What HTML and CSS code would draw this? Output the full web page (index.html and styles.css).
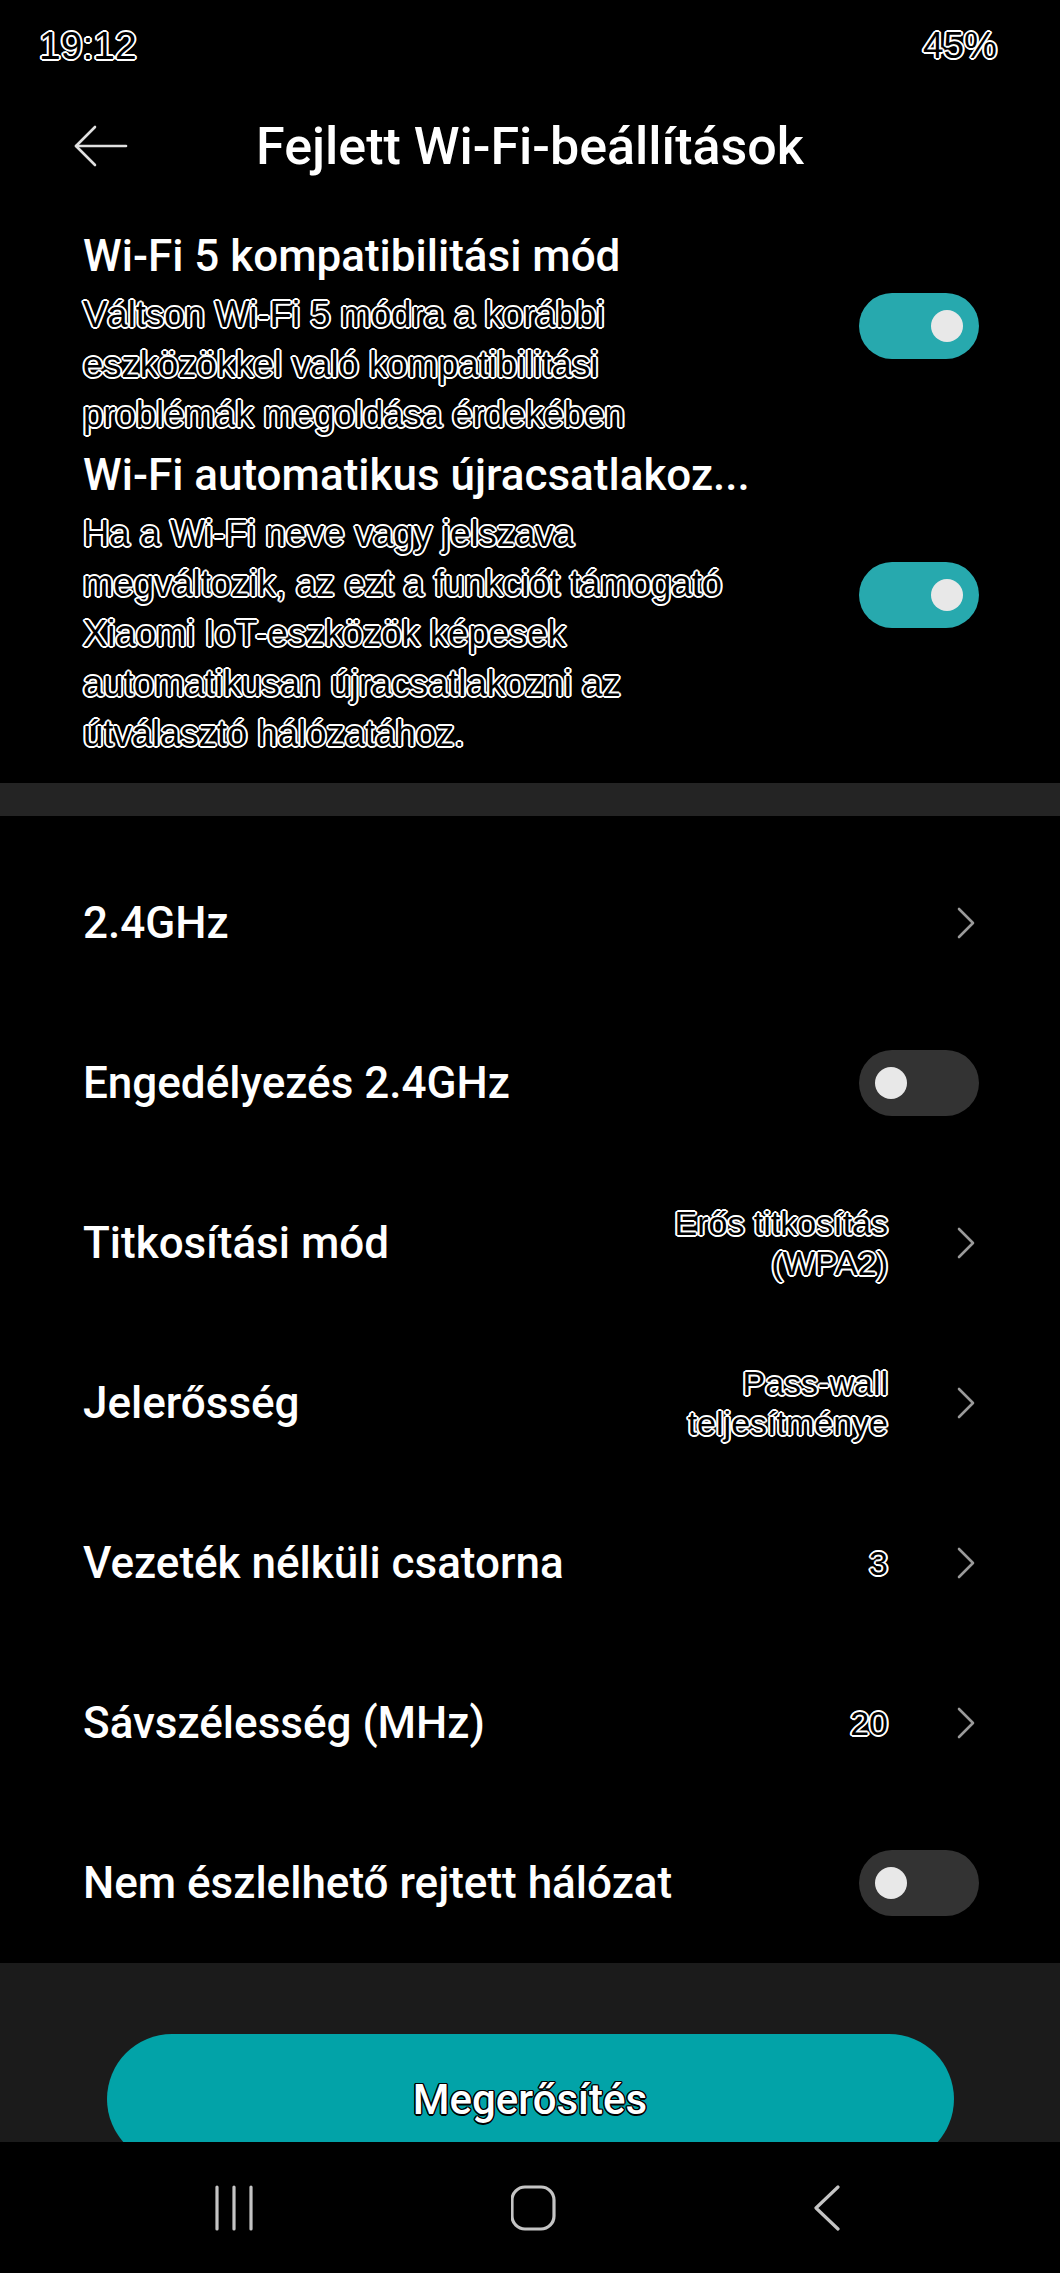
FILE: index.html
```html
<!DOCTYPE html>
<html lang="hu">
<head>
  <meta charset="UTF-8" />
  <meta name="viewport" content="width=device-width, initial-scale=1.0"/>
  <title>Fejlett Wi-Fi-beállítások</title>
  <link rel="stylesheet" href="styles.css">
</head>
<body>
  <div class="status-bar">
    <span class="outlined clock">19:12</span>
    <span class="outlined">45%</span>
  </div>

  <header class="top-bar">
    <div class="back">
      <svg width="54" height="42" viewBox="0 0 54 42">
        <polyline points="21,2 2,21 21,40" fill="none" stroke="#e0e0e0" stroke-width="2.6" stroke-linejoin="round" stroke-linecap="round"/>
        <line x1="2" y1="21" x2="52" y2="21" stroke="#e0e0e0" stroke-width="2.6" stroke-linecap="round"/>
      </svg>
    </div>
    <h1>Fejlett Wi-Fi-beállítások</h1>
    <div></div>
  </header>

  <section class="compat">
    <div class="option">
      <div class="option-text">
        <div class="option-title">Wi-Fi 5 kompatibilitási mód</div>
        <div class="option-desc outlined">Váltson Wi-Fi 5 módra a korábbi<br>eszközökkel való kompatibilitási<br>problémák megoldása érdekében</div>
      </div>
      <div class="switch on"></div>
    </div>
    <div class="option">
      <div class="option-text">
        <div class="option-title">Wi-Fi automatikus újracsatlakoz...</div>
        <div class="option-desc outlined">Ha a Wi-Fi neve vagy jelszava<br>megváltozik, az ezt a funkciót támogató<br>Xiaomi IoT-eszközök képesek<br>automatikusan újracsatlakozni az<br>útválasztó hálózatához.</div>
      </div>
      <div class="switch on"></div>
    </div>
  </section>

  <div class="divider"></div>

  <section class="band-list">
    <div class="row">
      <span class="row-label">2.4GHz</span>
      <svg class="chevron" width="18" height="32" viewBox="0 0 18 32"><polyline points="2,2 16,16 2,30"/></svg>
    </div>
    <div class="row">
      <span class="row-label">Engedélyezés 2.4GHz</span>
      <div class="switch"></div>
    </div>
    <div class="row">
      <span class="row-label">Titkosítási mód</span>
      <span class="row-value outlined">Erős titkosítás<br>(WPA2)</span>
      <svg class="chevron" width="18" height="32" viewBox="0 0 18 32"><polyline points="2,2 16,16 2,30"/></svg>
    </div>
    <div class="row">
      <span class="row-label">Jelerősség</span>
      <span class="row-value outlined">Pass-wall<br>teljesítménye</span>
      <svg class="chevron" width="18" height="32" viewBox="0 0 18 32"><polyline points="2,2 16,16 2,30"/></svg>
    </div>
    <div class="row">
      <span class="row-label">Vezeték nélküli csatorna</span>
      <span class="row-value outlined">3</span>
      <svg class="chevron" width="18" height="32" viewBox="0 0 18 32"><polyline points="2,2 16,16 2,30"/></svg>
    </div>
    <div class="row">
      <span class="row-label">Sávszélesség (MHz)</span>
      <span class="row-value outlined">20</span>
      <svg class="chevron" width="18" height="32" viewBox="0 0 18 32"><polyline points="2,2 16,16 2,30"/></svg>
    </div>
    <div class="row">
      <span class="row-label">Nem észlelhető rejtett hálózat</span>
      <div class="switch"></div>
    </div>
  </section>

  <div class="footer">
    <button class="confirm">Megerősítés</button>
  </div>

  <nav class="nav-bar">
    <svg width="44" height="46" viewBox="0 0 44 46">
      <line x1="4" y1="2" x2="4" y2="44"/>
      <line x1="21" y1="2" x2="21" y2="44"/>
      <line x1="38" y1="2" x2="38" y2="44"/>
    </svg>
    <svg width="48" height="46" viewBox="0 0 48 46">
      <rect x="1" y="2" width="42" height="42" rx="13"/>
    </svg>
    <svg width="30" height="46" viewBox="0 0 30 46">
      <polyline points="26,2 4,23 26,44"/>
    </svg>
  </nav>
</body>
</html>
```

FILE: styles.css
```css
body {
  margin: 0;
  background: #000;
  color: #fff;
  font-family: Roboto, 'Liberation Sans', sans-serif;
  width: 1060px;
  height: 2273px;
  overflow: hidden;
}

/* hollow white text, as in the screenshot */
.outlined {
  font-family: 'Liberation Sans', Arial, sans-serif;
  color: #000;
  text-shadow:
    -2px 0 #fff, 2px 0 #fff, 0 -2px #fff, 0 2px #fff,
    -1.4px -1.4px #fff, 1.4px -1.4px #fff, -1.4px 1.4px #fff, 1.4px 1.4px #fff,
    -1px 0 #fff, 1px 0 #fff, 0 -1px #fff, 0 1px #fff;
}

.status-bar {
  height: 92px;
  display: flex;
  justify-content: space-between;
  align-items: center;
  padding: 0 63px 0 39px;
  font-size: 37px;
}

.clock {
  font-size: 39px;
}

.top-bar {
  height: 108px;
  display: grid;
  grid-template-columns: 1fr auto 1fr;
  align-items: center;
}

.back {
  padding-left: 74px;
  display: flex;
}

.top-bar h1 {
  margin: 0;
  font-size: 52px;
  font-weight: 500;
}

.compat {
  padding-top: 26px;
}

.option {
  display: flex;
  align-items: center;
  padding: 0 81px 0 83px;
  margin-bottom: 5px;
}

.option-text {
  flex: 1;
}

.option-title {
  font-size: 44px;
  font-weight: 500;
  line-height: 60px;
  margin-bottom: 4px;
}

.option-desc {
  font-size: 36.5px;
  line-height: 50px;
}

.option .switch {
  margin-bottom: 14px;
}

.switch {
  position: relative;
  width: 120px;
  height: 66px;
  border-radius: 33px;
  background: #333;
  flex-shrink: 0;
}

.switch::after {
  content: "";
  position: absolute;
  top: 17px;
  left: 16px;
  width: 32px;
  height: 32px;
  border-radius: 50%;
  background: #e8e8e8;
}

.switch.on {
  background: #27a9ae;
}

.switch.on::after {
  left: auto;
  right: 16px;
}

.divider {
  height: 33px;
  margin-top: 24px;
  background: #242424;
}

.band-list {
  padding-top: 27px;
}

.row {
  height: 160px;
  display: flex;
  align-items: center;
  padding: 0 81px 0 83px;
}

.row-label {
  flex: 1;
  font-size: 44px;
  font-weight: 500;
}

.row-value {
  font-size: 34px;
  line-height: 40px;
  text-align: right;
  margin-right: 69px;
}

.chevron {
  margin-right: 4px;
}

.chevron polyline {
  fill: none;
  stroke: #9a9a9a;
  stroke-width: 2.6;
  stroke-linecap: round;
  stroke-linejoin: round;
}

.footer {
  height: 179px;
  background: #1b1b1b;
  overflow: hidden;
  display: flex;
  justify-content: center;
}

.confirm {
  margin-top: 71px;
  width: 847px;
  height: 130px;
  flex-shrink: 0;
  border: none;
  border-radius: 65px;
  background: #02a3a8;
  color: #fff;
  font-family: Roboto, sans-serif;
  font-size: 42px;
  font-weight: 500;
  text-shadow:
    -1.5px 0 #000, 1.5px 0 #000, 0 -1.5px #000, 0 1.5px #000,
    -1px -1px #000, 1px -1px #000, -1px 1px #000, 1px 1px #000;
}

.nav-bar {
  height: 132px;
  display: flex;
  align-items: center;
  justify-content: space-between;
  padding: 0 218px 0 213px;
}

.nav-bar line,
.nav-bar rect,
.nav-bar polyline {
  fill: none;
  stroke: #c4c4c4;
  stroke-width: 3.2;
  stroke-linecap: round;
  stroke-linejoin: round;
}
```
